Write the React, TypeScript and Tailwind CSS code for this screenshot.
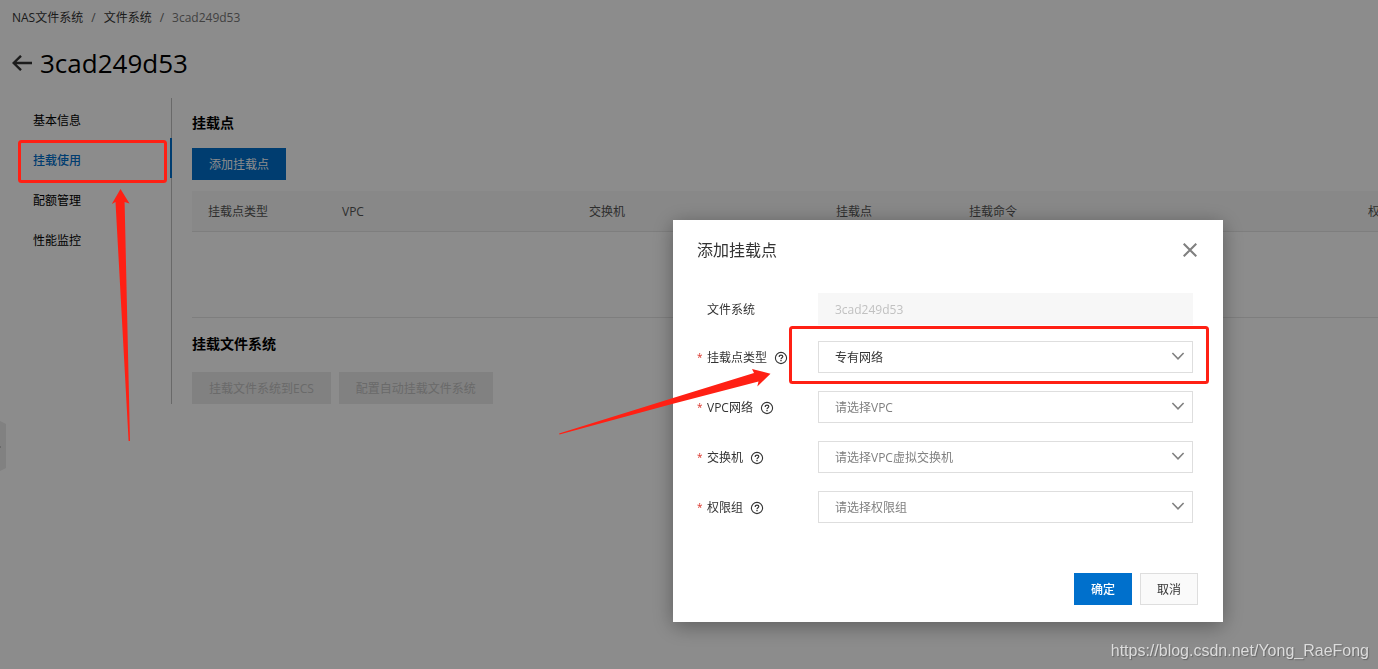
import React, { useState } from 'react';

const NAV_ITEMS = ['基本信息', '挂载使用', '配额管理', '性能监控'];

const COLUMNS = [
    { title: '挂载点类型', width: 'w-[134px]' },
    { title: 'VPC', width: 'w-[247px]' },
    { title: '交换机', width: 'w-[247px]' },
    { title: '挂载点', width: 'w-[133px]' },
    { title: '挂载命令', width: 'w-[399px]' },
    { title: '权限组', width: 'w-[140px]' },
];

const HelpIcon = () => (
    <svg className="w-3 h-3 shrink-0 text-[#333]" viewBox="0 0 12 12" fill="none" stroke="currentColor" overflow="visible">
        <circle cx="6" cy="6" r="5.6" strokeWidth="1.1" />
        <path d="M4.2 4.9C4.2 3.7 5 3.1 6 3.1S7.8 3.7 7.8 4.6C7.8 5.7 6 5.8 6 7.3" strokeWidth="1.2" />
        <path d="M6 8.1V9.3" strokeWidth="1.3" />
    </svg>
);

interface SelectRowProps {
    id: string;
    label: string;
    options: string[];
    placeholder?: string;
}

const SelectRow: React.FC<SelectRowProps> = ({ id, label, options, placeholder }) => {
    const [value, setValue] = useState(placeholder ? '' : options[0]);

    return (
        <div className="flex items-center">
            <label htmlFor={id} className="w-[121px] shrink-0 flex items-center pt-0.5 text-[#333]">
                <span className="w-[10px] text-[10px] text-[#d93026]">*</span>
                {label}
                <span className="ml-2"><HelpIcon /></span>
            </label>
            <div className="relative flex-1">
                <select
                    id={id}
                    value={value}
                    onChange={e => setValue(e.target.value)}
                    className={`w-full h-8 appearance-none border border-[#dedede] bg-white pt-0.5 pl-4 pr-8 outline-none ${value ? 'text-[#333]' : 'text-[#808080]'}`}
                >
                    {placeholder && <option value="">{placeholder}</option>}
                    {options.map(o => <option key={o} value={o}>{o}</option>)}
                </select>
                <svg className="absolute right-[9px] top-[11px] w-3 h-2 pointer-events-none" viewBox="0 0 12 8" fill="none" stroke="#808080" strokeWidth="1.6" overflow="visible">
                    <path d="M0.4 1L6 6.8L11.6 1" />
                </svg>
            </div>
        </div>
    );
};

const AddMountDialog: React.FC<{ onClose: () => void }> = ({ onClose }) => (
    <div className="fixed inset-0 z-10 bg-black/45 flex items-start pt-[220px] pl-[673px]">
        <div role="dialog" aria-labelledby="dialog-title" className="relative w-[550px] shrink-0 bg-white shadow-[0_4px_20px_rgba(0,0,0,0.35)]">
            <div className="flex items-center justify-between pt-[18px] pl-6 pr-[26px]">
                <h2 id="dialog-title" className="text-base leading-6 text-[#333]">添加挂载点</h2>
                <button aria-label="关闭" onClick={onClose} className="w-[14px] h-[14px] cursor-pointer">
                    <svg viewBox="0 0 14 14" fill="none" stroke="#808080" strokeWidth="2.1">
                        <path d="M0.7 0.7L13.3 13.3M13.3 0.7L0.7 13.3" />
                    </svg>
                </button>
            </div>

            <form className="pt-[31px] pl-6 pr-[30px]" onSubmit={e => e.preventDefault()}>
                <div className="flex items-center mb-4">
                    <label htmlFor="fs" className="w-[121px] shrink-0 pt-0.5 pl-[10px] text-[#333]">文件系统</label>
                    <input id="fs" disabled value="3cad249d53" className="flex-1 min-w-0 h-8 px-4 border border-[#f7f7f7] bg-[#f7f7f7] text-[#c1c1c1]" />
                </div>
                <div className="flex flex-col gap-[18px]">
                    <SelectRow id="type" label="挂载点类型" options={['专有网络']} />
                    <SelectRow id="vpc" label="VPC网络" options={[]} placeholder="请选择VPC" />
                    <SelectRow id="switch" label="交换机" options={[]} placeholder="请选择VPC虚拟交换机" />
                    <SelectRow id="group" label="权限组" options={[]} placeholder="请选择权限组" />
                </div>
            </form>

            <div className="flex justify-end gap-2 pt-[50px] pr-[25px] pb-[17px]">
                <button className="w-[58px] h-8 pt-0.5 bg-[#0070cc] text-white font-medium cursor-pointer">确定</button>
                <button onClick={onClose} className="w-[58px] h-8 pt-0.5 border border-[#dedede] bg-[#fafafa] text-[#333] cursor-pointer">取消</button>
            </div>

            {/* Highlight frame and arrow on the mount type field */}
            <svg className="absolute left-0 top-0 w-full h-full overflow-visible pointer-events-none" aria-hidden="true">
                <rect x="117.5" y="107.5" width="417" height="55" rx="2" fill="none" stroke="#ff2014" strokeWidth="3" />
                <polygon points="97.5,153.7 79,149 81,153 0,178 -114,213.4 -113.5,214.6 0,183.8 85.5,161.5 84.3,166.5" fill="#ff2014" />
            </svg>
        </div>
    </div>
);

export default function App() {
    const [open, setOpen] = useState(true);
    const [active, setActive] = useState('挂载使用');

    return (
        <div className="min-h-screen bg-white overflow-hidden text-xs text-black font-['Open_Sans','Noto_Sans_CJK_SC',sans-serif]">
            <div className="pt-2 pl-3">
                <nav className="flex items-center gap-2 leading-5 text-[#333]">
                    <a href="#nas">NAS文件系统</a>
                    <span className="text-[#666]">/</span>
                    <a href="#fs">文件系统</a>
                    <span className="text-[#666]">/</span>
                    <span className="text-[#777]">3cad249d53</span>
                </nav>
                <div className="flex items-center gap-2 pt-[15px]">
                    <a href="#back" aria-label="返回">
                        <svg className="w-5 h-4" viewBox="0 0 20 16" fill="none" stroke="#333" strokeWidth="2.4">
                            <path d="M20 8H1.5M9 0.8L1.6 8L9 15.2" />
                        </svg>
                    </a>
                    <h1 className="text-[26px] leading-10">3cad249d53</h1>
                </div>
            </div>

            <div className="flex items-start pt-[15px]">
                <aside className="relative w-[172px] h-[306px] shrink-0 border-r border-[#bfbfbf]">
                    {NAV_ITEMS.map(item => (
                        <a
                            key={item}
                            href={`#${item}`}
                            onClick={() => setActive(item)}
                            className={`-mr-px h-10 flex items-center pl-[33px] pt-1.5 ${item === active ? 'text-[#0070cc] font-medium border-r-2 border-[#0070cc]' : ''}`}
                        >
                            {item}
                        </a>
                    ))}
                    {/* Highlight frame and arrow on the active entry */}
                    <svg className="absolute left-0 top-0 z-20 w-full h-full overflow-visible pointer-events-none" aria-hidden="true">
                        <rect x="19.5" y="43.5" width="146" height="40" rx="2" fill="none" stroke="#ff2014" strokeWidth="3" />
                        <polygon points="120.5,91 129.5,105.5 124.6,104 130,343 128.6,343 115.5,104 111.8,106" fill="#ff2014" />
                    </svg>
                </aside>

                <main className="flex-1 min-w-0 pl-5">
                    <h3 className="pt-[15px] text-sm leading-5 font-bold">挂载点</h3>
                    <button onClick={() => setOpen(true)} className="mt-[15px] h-8 pt-0.5 px-[17px] bg-[#0070cc] text-white cursor-pointer">添加挂载点</button>
                    <div className="mt-[11px] overflow-hidden">
                        <table className="w-full min-w-[1300px] table-fixed text-left">
                            <thead>
                                <tr className="h-10 bg-[#f7f7f7] border-b border-[#e6e6e6] text-[#555]">
                                    {COLUMNS.map(c => (
                                        <th key={c.title} className={`${c.width} px-4 pt-0.5 font-normal`}>{c.title}</th>
                                    ))}
                                </tr>
                            </thead>
                            <tbody>
                                <tr className="h-[86px] border-b border-[#e6e6e6]">
                                    <td colSpan={6}></td>
                                </tr>
                            </tbody>
                        </table>
                    </div>
                    <h3 className="pt-4 text-sm leading-5 font-bold">挂载文件系统</h3>
                    <div className="flex gap-2 pt-[18px]">
                        <button disabled className="h-8 px-[17px] pt-0.5 bg-[#ebebeb] text-[#c1c1c1]">挂载文件系统到ECS</button>
                        <button disabled className="h-8 px-[17px] pt-0.5 bg-[#ebebeb] text-[#c1c1c1]">配置自动挂载文件系统</button>
                    </div>
                </main>
            </div>

            {/* Collapsed sidebar handle */}
            <svg className="fixed left-0 top-[421px] w-[6px] h-[50px]" viewBox="0 0 6 50">
                <path d="M0 0L6 3V47L0 50Z" fill="#ebebeb" />
                <path d="M0 26H1" stroke="#999" />
            </svg>

            {open && <AddMountDialog onClose={() => setOpen(false)} />}

            <p className="fixed right-[9px] bottom-[6px] z-30 text-base leading-6 text-[#dcdcdc] font-['Liberation_Sans',sans-serif] [text-shadow:1px_1px_1px_#666]">
                https://blog.csdn.net/Yong_RaeFong
            </p>
        </div>
    );
}
